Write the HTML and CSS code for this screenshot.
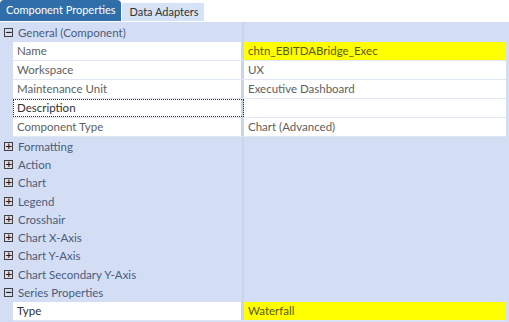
FILE: index.html
```html
<html>
<head>
	<title>Component Properties</title>
	<meta charset="utf-8">
	<link rel="stylesheet" href="styles.css">
</head>
<body>
<div class="tabs">
	<div class="tab tab-active">Component Properties</div>
	<div class="tab">Data Adapters</div>
</div>
<div class="grid">
	<div class="cat cat-top"><span class="exp">&minus;</span>General (Component)</div>
	<div class="prop"><div class="pname">Name</div><div class="pval hl">chtn_EBITDABridge_Exec</div></div>
	<div class="prop"><div class="pname">Workspace</div><div class="pval">UX</div></div>
	<div class="prop"><div class="pname">Maintenance Unit</div><div class="pval">Executive Dashboard</div></div>
	<div class="prop"><div class="pname focus">Description</div><div class="pval"></div></div>
	<div class="prop"><div class="pname">Component Type</div><div class="pval">Chart (Advanced)</div></div>
	<div class="cat"><span class="exp">+</span>Formatting</div>
	<div class="cat"><span class="exp">+</span>Action</div>
	<div class="cat"><span class="exp">+</span>Chart</div>
	<div class="cat"><span class="exp">+</span>Legend</div>
	<div class="cat"><span class="exp">+</span>Crosshair</div>
	<div class="cat"><span class="exp">+</span>Chart X-Axis</div>
	<div class="cat"><span class="exp">+</span>Chart Y-Axis</div>
	<div class="cat"><span class="exp">+</span>Chart Secondary Y-Axis</div>
	<div class="cat"><span class="exp">&minus;</span>Series Properties</div>
	<div class="prop"><div class="pname dark">Type</div><div class="pval hl">Waterfall</div></div>
</div>
</body>
</html>
```
FILE: styles.css
```css
body {
	margin: 0;
	font-family: Lato, "Open Sans", sans-serif;
	font-size: 11.5px;
	background: #ffffff;
	overflow: hidden;
}

.tabs {
	display: flex;
	align-items: flex-end;
	height: 21px;
	gap: 1px;
	border-bottom: 1px solid #ffffff;
}

.tab {
	height: 18px;
	line-height: 18px;
	padding: 0 5px 0 8px;
	font-size: 11px;
	background: #d6e3f6;
	color: #333333;
}

.tab-active {
	height: 21px;
	line-height: 20px;
	background: #2f6ea8;
	color: #ffffff;
	border-radius: 4px 4px 0 0;
	padding: 0 5px 0 6px;
}

.grid {
	background: #d3def4;
	height: 300px;
	padding-right: 3px;
}

.cat {
	display: flex;
	align-items: center;
	height: 18.3px;
	color: #4b5c7c;
	padding-left: 4px;
	background: linear-gradient(to right, transparent 242px, #c8d4ea 242px, #c8d4ea 244px, transparent 244px);
}

.cat-top {
	height: 20px;
}

.exp {
	display: inline-block;
	box-sizing: border-box;
	width: 9px;
	height: 9px;
	border: 1px solid #404040;
	font-size: 9px;
	line-height: 6px;
	text-align: center;
	color: #202020;
	font-weight: bold;
	margin-right: 5px;
	font-family: "DejaVu Sans", sans-serif;
}

.prop {
	display: flex;
	height: 18px;
	margin-left: 13px;
	border-bottom: 1px solid #dfe7f4;
}

.pname {
	box-sizing: border-box;
	width: 231px;
	padding-left: 4px;
	line-height: 18px;
	background: #ffffff;
	color: #606060;
	border-right: 3px solid #c8d4ea;
}

.pval {
	flex: 1;
	padding-left: 4px;
	line-height: 18px;
	background: #ffffff;
	color: #606060;
}

.focus {
	outline: 1px dotted #303030;
	outline-offset: -1px;
	color: #303030;
}

.dark {
	color: #303030;
}

.hl {
	background: #ffff00;
	color: #5a5a00;
}
```
